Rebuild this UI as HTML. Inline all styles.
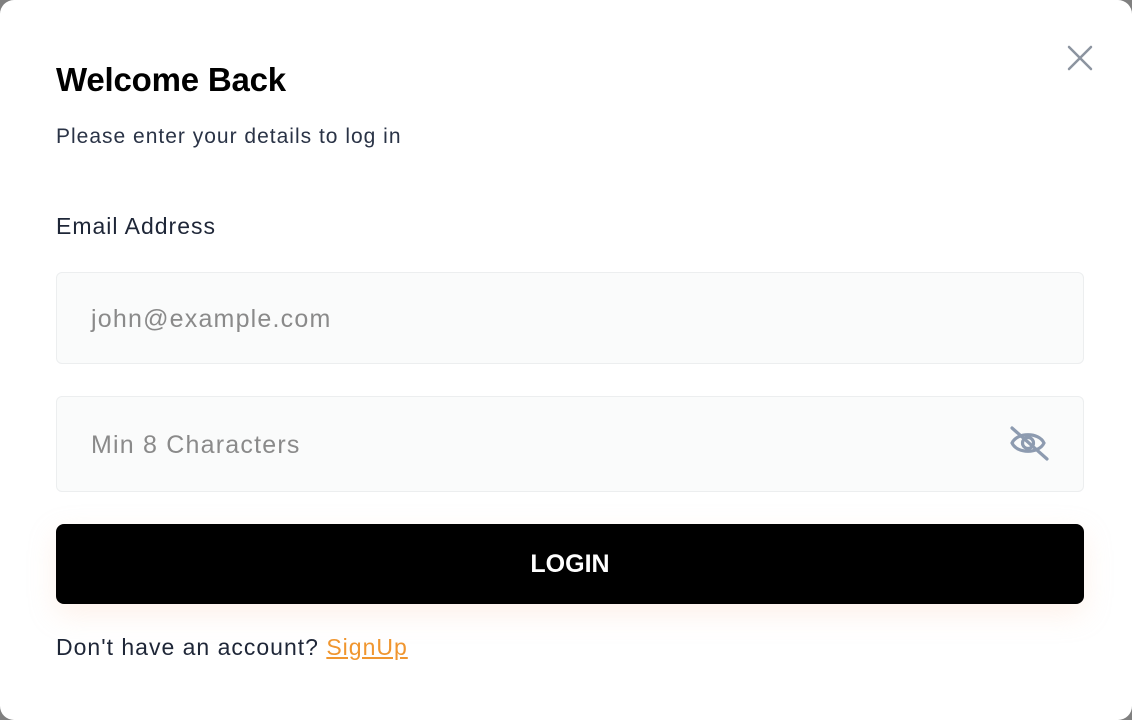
<!DOCTYPE html>
<html><head><meta charset="utf-8"><style>
html,body{margin:0;padding:0;width:1132px;height:720px;overflow:hidden;background:#808080;font-family:"Liberation Sans",sans-serif;}
.modal{position:absolute;left:0;top:0;width:1132px;height:720px;background:#fff;border-radius:14px;}
.t{position:absolute;left:56px;top:61px;font-size:33px;font-weight:bold;color:#000;letter-spacing:-0.2px;}
.s{position:absolute;left:56px;top:125px;font-size:21px;color:#2a3346;letter-spacing:1px;}
.l{position:absolute;left:56px;top:213px;font-size:23px;color:#1e2637;letter-spacing:1px;}
.in{position:absolute;left:56px;width:1026px;background:#fafbfb;border:1px solid #eceeef;border-radius:6px;}
.ph{position:absolute;left:34px;font-size:25px;color:#8a8a8a;letter-spacing:1.2px;}
.btn{position:absolute;left:56px;top:524px;width:1028px;height:80px;background:#000;border-radius:8px;color:#fff;font-size:25px;font-weight:bold;text-align:center;line-height:80px;box-shadow:0 10px 28px rgba(250,200,170,0.25);}
.f{position:absolute;left:56px;top:634px;font-size:23px;color:#1e2637;letter-spacing:1px;}
.f a{color:#f0962f;text-decoration:underline;}
</style></head><body>
<div class="modal">
<svg style="position:absolute;left:1066px;top:44px" width="28" height="28" viewBox="0 0 28 28"><path d="M3 3L25 25M25 3L3 25" stroke="#8c94a0" stroke-width="2.5" stroke-linecap="round"/></svg>
<div class="t">Welcome Back</div>
<div class="s">Please enter your details to log in</div>
<div class="l">Email Address</div>
<div class="in" style="top:272px;height:90px"><div class="ph" style="top:32px">john@example.com</div></div>
<div class="in" style="top:396px;height:94px"><div class="ph" style="top:34px">Min 8 Characters</div>
<svg style="position:absolute;left:950px;top:27px" width="44" height="40" viewBox="0 0 44 40"><g fill="none" stroke="#8d9bb0" stroke-width="3.2" stroke-linecap="round"><path d="M5 19C10 8 32 8 37 19C32 30 10 30 5 19Z"/><circle cx="21" cy="19" r="5.5"/><path d="M5 4L40 35"/></g></svg>
</div>
<div class="btn">LOGIN</div>
<div class="f">Don't have an account? <a>SignUp</a></div>
</div>
</body></html>
